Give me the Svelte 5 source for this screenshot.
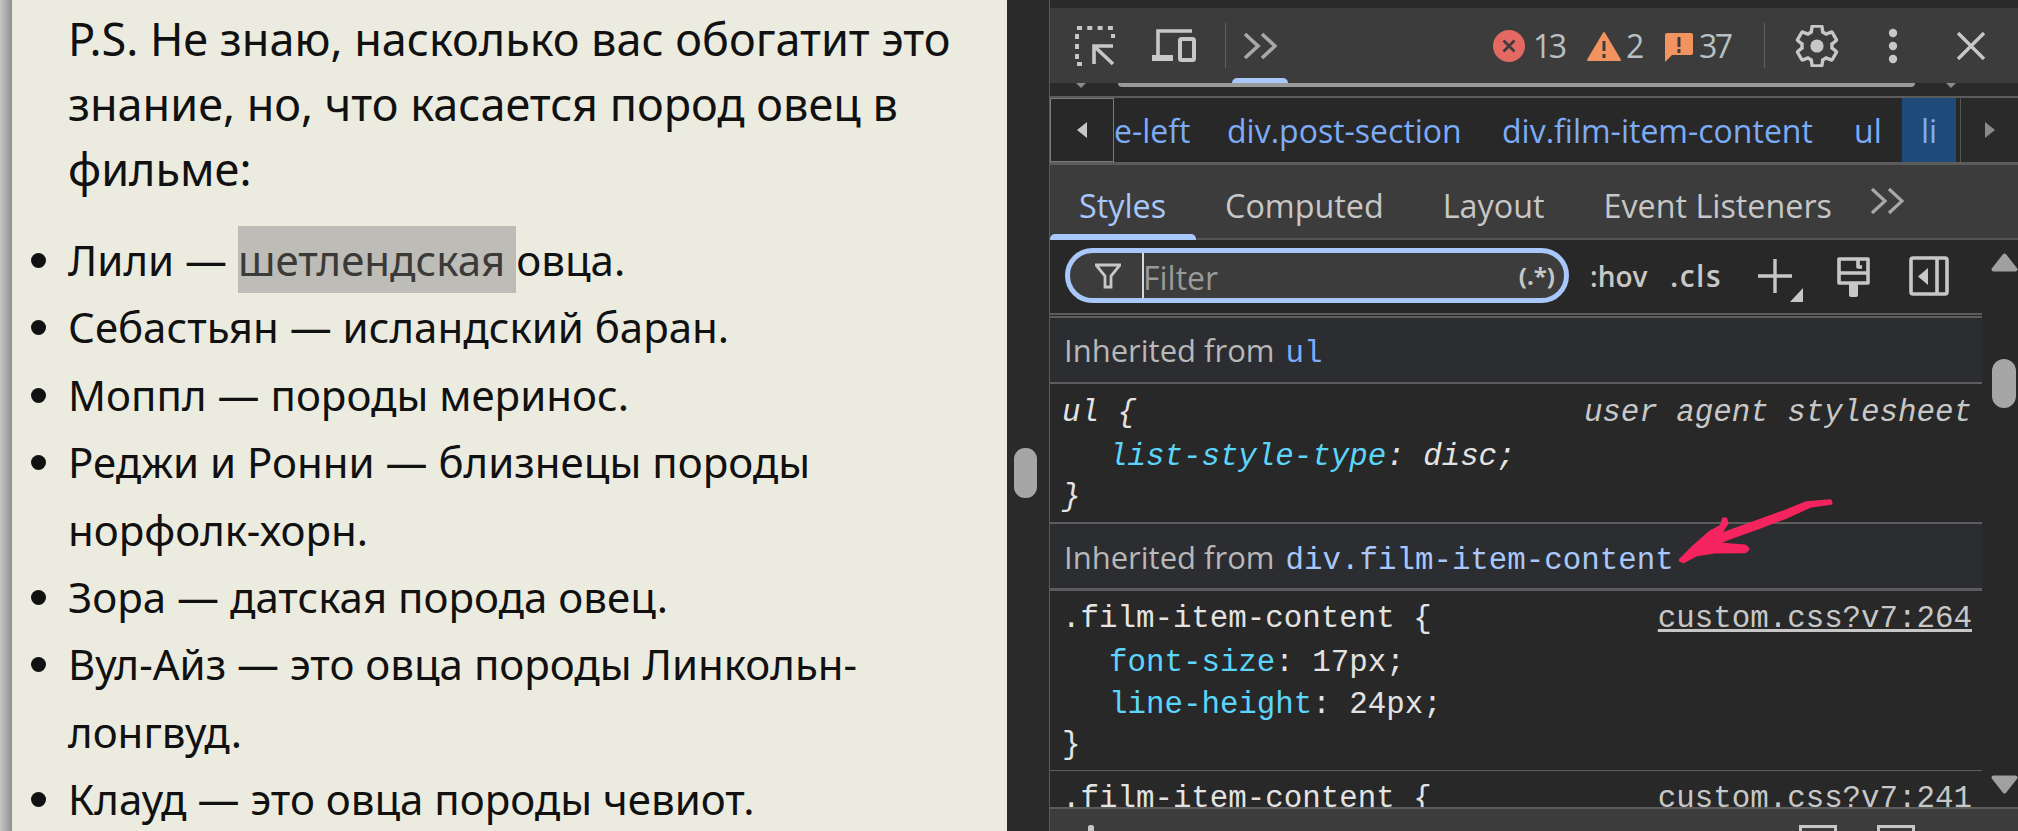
<script lang="ts">
	const list = [
		'Себастьян — исландский баран.',
		'Моппл — породы меринос.',
		'Реджи и Ронни — близнецы породы норфолк-хорн.',
		'Зора — датская порода овец.',
		'Вул-Айз — это овца породы Линкольн-лонгвуд.',
		'Клауд — это овца породы чевиот.'
	];
</script>

<div class="screen">
	<main class="page">
		<p>P.S. Не знаю, насколько вас обогатит это знание, но, что касается пород овец в фильме:</p>
		<ul>
			<li>Лили — <mark>шетлендская{' '}</mark>овца.</li>
			{#each list as item}
				<li>{item}</li>
			{/each}
		</ul>
	</main>

	<div class="gutter"><span class="handle"></span></div>

	<section class="devtools">
		<div class="top-gap"></div>

		<header class="toolbar">
			<svg class="i-inspect" width="40" height="40" viewBox="0 0 40 40" fill="none" stroke="#c7c7c7" stroke-width="4">
				<path d="M2 2h36" stroke-dasharray="5 5.300" />
				<path d="M2 8v30h10" stroke-dasharray="5 5" />
				<path d="M38 8v7" stroke-dasharray="4 3" />
				<path d="M38 20H19v18M19 20l19 18" stroke-width="3.600" />
			</svg>
			<svg class="i-device" width="46" height="36" viewBox="0 0 46 36" fill="none" stroke="#c7c7c7" stroke-width="3.6">
				<path d="M42 3H8v24" />
				<path d="M2 30h21" stroke-width="6" />
				<rect x="30" y="11" width="14" height="21" rx="1.500" stroke-width="4" />
			</svg>
			<span class="sep s1"></span>
			<svg class="chev c1" width="34" height="28" viewBox="0 0 34 28" fill="none" stroke="#a8a8a8" stroke-width="3.6">
				<path d="M2 2l13 12L2 26M19 2l13 12-13 12" />
			</svg>
			<span class="tab-mark"></span>

			<svg class="i-err" width="32" height="32" viewBox="0 0 32 32">
				<circle cx="16" cy="16" r="16" fill="#e46962" />
				<path d="M10.500 10.500l11 11M21.500 10.500l-11 11" stroke="#3c3c3c" stroke-width="2.800" />
			</svg>
			<span class="count n13">13</span>
			<svg class="i-warn" width="36" height="30" viewBox="0 0 36 30">
				<path d="M18 2l16 27H2z" fill="#f29360" stroke="#f29360" stroke-width="2" stroke-linejoin="round" />
				<path d="M18 10v10M18 23v4" stroke="#3c3c3c" stroke-width="3" />
			</svg>
			<span class="count n2">2</span>
			<svg class="i-msg" width="30" height="30" viewBox="0 0 30 30">
				<path d="M3 1h24q2 0 2 2v18q0 2-2 2H8l-7 7V3q0-2 2-2z" fill="#f29360" />
				<path d="M15 5v10M15 17v4" stroke="#3c3c3c" stroke-width="3" />
			</svg>
			<span class="count n37">37</span>
			<span class="sep s2"></span>
			<svg class="i-gear" width="44" height="42" viewBox="1.500 1.500 21 21" fill="none" stroke="#c7c7c7" stroke-width="1.700">
				<path d="M19.430 12.980c.04-.32.07-.64.07-.98s-.03-.66-.07-.98l2.110-1.650c.19-.15.24-.42.12-.64l-2-3.460c-.12-.22-.39-.3-.61-.22l-2.490 1c-.52-.4-1.080-.73-1.690-.98l-.38-2.650C14.460 2.180 14.250 2 14 2h-4c-.25 0-.46.18-.49.42l-.38 2.650c-.61.25-1.170.59-1.690.98l-2.490-1c-.23-.09-.49 0-.61.22l-2 3.460c-.13.22-.07.49.12.64l2.110 1.650c-.04.32-.07.65-.07.98s.03.66.07.98l-2.110 1.650c-.19.15-.24.42-.12.64l2 3.460c.12.22.39.3.61.22l2.490-1c.52.4 1.080.73 1.690.98l.38 2.650c.03.24.24.42.49.42h4c.25 0 .46-.18.49-.42l.38-2.650c.61-.25 1.170-.59 1.690-.98l2.490 1c.23.09.49 0 .61-.22l2-3.460c.12-.22.07-.49-.12-.64l-2.110-1.650z" />
				<circle cx="12" cy="12" r="3.300" fill="#c7c7c7" stroke="none" />
			</svg>
			<svg class="i-kebab" width="10" height="36" viewBox="0 0 10 36" fill="#c7c7c7">
				<circle cx="5" cy="5" r="4.200" /><circle cx="5" cy="18" r="4.200" /><circle cx="5" cy="31" r="4.200" />
			</svg>
			<svg class="i-close" width="30" height="28" viewBox="0 0 30 28" stroke="#c7c7c7" stroke-width="3.400">
				<path d="M2 1l26 26M28 1L2 27" />
			</svg>
		</header>

		<div class="strip">
			<span class="strip-arrow"></span>
			<span class="strip-thumb"></span>
			<span class="strip-arrow"></span>
		</div>

		<nav class="crumbs">
			<span class="crumb-btn left"><i></i></span>
			<div class="crumb-list">
				<span class="clip">e-left</span>
				<span class="post">div.post-section</span>
				<span class="film">div.film-item-content</span>
				<span class="ul">ul</span>
				<span class="li">li</span>
			</div>
			<span class="crumb-btn right"><i></i></span>
		</nav>

		<div class="tabs">
			<span class="tab active">Styles</span>
			<span class="tab">Computed</span>
			<span class="tab">Layout</span>
			<span class="tab">Event Listeners</span>
			<svg class="chev c2" width="34" height="28" viewBox="0 0 34 28" fill="none" stroke="#a8a8a8" stroke-width="3.200">
				<path d="M2 2l13 12L2 26M19 2l13 12-13 12" />
			</svg>
		</div>

		<div class="styles">
			<div class="pane">
				<div class="filter-bar">
					<div class="filter">
						<svg width="26" height="26" viewBox="0 0 26 26" fill="none" stroke="#c7c7c7" stroke-width="2.800">
							<path d="M1 2h24l-9 11v11h-6V13z" />
						</svg>
						<span class="caret"></span>
						<span class="placeholder">Filter</span>
						<span class="regex">(.*)</span>
					</div>
					<span class="bar-text hov">:hov</span>
					<span class="bar-text cls">.cls</span>
					<svg class="i-plus" width="46" height="44" viewBox="0 0 46 44">
						<path d="M17 1v34M0 18h34" stroke="#c7c7c7" stroke-width="3.400" />
						<path d="M45 30v14H32z" fill="#c7c7c7" />
					</svg>
					<svg class="i-paint" width="36" height="42" viewBox="0 0 36 42" fill="none" stroke="#c7c7c7" stroke-width="3.600" stroke-linejoin="round">
						<path d="M3 3h29v24H3zM3 17h29M22 3v8h4" />
						<path d="M13 27h9v12q0 2-2 2h-5q-2 0-2-2z" fill="#c7c7c7" stroke="none" />
					</svg>
					<svg class="i-side" width="40" height="40" viewBox="0 0 40 40" fill="none" stroke="#c7c7c7" stroke-width="3.600">
						<rect x="2" y="2" width="36" height="36" rx="2" />
						<path d="M28 2v36" />
						<path d="M19 12v17l-10-8.500z" fill="#c7c7c7" stroke="none" />
					</svg>
				</div>

				<div class="divider double"></div>
				<div class="inherit">Inherited from <code>ul</code></div>

				<div class="rule first">
					<div class="line"><em>ul {'{'}</em><em class="src">user agent stylesheet</em></div>
					<div class="line prop"><em><b>list-style-type</b>: disc;</em></div>
					<div class="line"><em>{'}'}</em></div>
				</div>

				<div class="inherit second">Inherited from <code>div.film-item-content</code></div>

				<div class="rule">
					<div class="line"><span>.film-item-content {'{'}</span><u class="src">custom.css?v7:264</u></div>
					<div class="line prop"><span><b>font-size</b>: 17px;</span></div>
					<div class="line prop"><span><b>line-height</b>: 24px;</span></div>
					<div class="line"><span>{'}'}</span></div>
				</div>

				<div class="rule last">
					<div class="line"><span>.film-item-content {'{'}</span><u class="src">custom.css?v7:241</u></div>
				</div>
			</div>

			<div class="vscroll">
				<svg class="up" width="27" height="19" viewBox="0 0 27 19" fill="#a0a0a0" stroke="#a0a0a0" stroke-width="4" stroke-linejoin="round">
					<path d="M13.500 2.500L24.500 16.500H2.500z" />
				</svg>
				<span class="thumb"></span>
				<svg class="down" width="27" height="19" viewBox="0 0 27 19" fill="#a0a0a0" stroke="#a0a0a0" stroke-width="4" stroke-linejoin="round">
					<path d="M13.500 16.500L24.500 2.500H2.500z" />
				</svg>
			</div>
		</div>

		<footer class="bottom">
			<span class="peek a"></span>
			<span class="peek b"></span>
			<span class="peek c"></span>
		</footer>
	</section>

	<!-- hand-drawn annotation on top of the screenshot -->
	<svg class="arrow" width="190" height="90" viewBox="0 0 570 270" fill="#f5245f" stroke="#f5245f" stroke-width="11" stroke-linejoin="round">
		<path d="M62 210L100 172L150 128L185 108L191 88L197 88L200 100L188 118L170 136L200 128L300 92L370 67L440 39L510 33L512 39L450 48L380 80L300 110L200 146L170 162L255 169L263 177L255 184L165 185L110 193L70 214z" />
	</svg>
</div>

<style>
	:global(body) {
		margin: 0;
		overflow: hidden;
	}

	.screen {
		position: relative;
		display: flex;
		width: 2018px;
		height: 831px;
		overflow: hidden;
		background: #2a2a2a;
	}

	.page {
		box-sizing: border-box;
		width: 1007px;
		height: 831px;
		margin: 0;
		padding: 6px 40px 0 68px;
		overflow: hidden;
		flex: none;
		color: #111;
		background: linear-gradient(90deg, #c6c6c4, #8f8f8f) 0 0 / 12px 100% no-repeat, #ecebe0;
		font: 42px/65px 'Noto Sans', sans-serif;
	}

	p {
		margin: 0 0 25px;
		font-size: 45px;
		line-height: 65px;
	}

	ul {
		margin: 0;
		padding: 0;
		list-style: disc;
		line-height: 67.4px;
	}

	mark {
		padding: 5px 0;
		color: #3a3a38;
		background: #bdbcb7;
	}

	.gutter {
		display: flex;
		flex: none;
		align-items: flex-start;
		justify-content: center;
		box-sizing: border-box;
		width: 42px;
		padding-top: 448px;
		padding-right: 6px;
	}

	.handle {
		width: 23px;
		height: 50px;
		border-radius: 11px;
		background: #a6a6a6;
	}

	.devtools {
		display: flex;
		flex: 1;
		flex-direction: column;
		min-width: 0;
		border-left: 1px solid #5a5a5a;
		color: #c7c7c7;
		font-family: 'Open Sans', sans-serif;
	}

	.top-gap {
		height: 8px;
		flex: none;
	}

	.toolbar {
		position: relative;
		display: flex;
		flex: none;
		align-items: center;
		height: 75px;
		background: #3c3c3c;
	}

	.toolbar > * {
		flex: none;
	}

	.i-inspect { margin-left: 25px; }
	.i-device { margin-left: 35px; }
	.sep { width: 1px; height: 45px; background: #5f5f5f; }
	.s1 { margin-left: 29px; }
	.c1 { margin-left: 17px; }
	.i-err { margin-left: 216px; }
	.i-warn { margin-left: 20px; }
	.i-msg { margin-left: 21px; margin-top: 2px; }
	.count {
		font-size: 32px;
		color: #b9c0c5;
		letter-spacing: -2.500px;
	}
	.n13 { width: 33px; margin-left: 8px; }
	.n2 { width: 17px; margin-left: 4px; }
	.n37 { width: 34px; margin-left: 5px; }
	.s2 { margin-left: 31px; }
	.i-gear { margin-left: 30px; }
	.i-kebab { margin-left: 49px; }
	.i-close { margin-left: 58px; }

	.tab-mark {
		position: absolute;
		left: 182px;
		bottom: 0;
		width: 56px;
		height: 5px;
		border-radius: 5px 5px 0 0;
		background: #a8c7fa;
	}

	.strip {
		display: flex;
		flex: none;
		align-items: flex-start;
		justify-content: space-between;
		box-sizing: border-box;
		height: 13px;
		padding: 0 62px 0 26px;
		background: #2a2a2a;
	}

	.strip-thumb {
		width: 797px;
		height: 4px;
		border-radius: 0 0 4px 4px;
		background: #9a9a9a;
	}

	.strip-arrow {
		width: 0;
		height: 0;
		border: 5px solid transparent;
		border-top-color: #8a8a8a;
		border-bottom: 0;
	}

	.crumbs {
		display: flex;
		flex: none;
		height: 64px;
		border-top: 2px solid #5c5c5c;
		border-bottom: 3px solid #5c5c5c;
		background: #282828;
		font-size: 32px;
		line-height: 66px;
	}

	.crumb-btn {
		display: flex;
		flex: none;
		align-items: center;
		justify-content: center;
		box-sizing: border-box;
		height: 64px;
	}

	.crumb-btn i {
		width: 0;
		height: 0;
		border-top: 8px solid transparent;
		border-bottom: 8px solid transparent;
	}

	.left {
		width: 64px;
		border: 1px solid #7a7a7a;
	}

	.left i {
		border-right: 10px solid #c7c7c7;
	}

	.right {
		width: 58px;
		border-left: 1px solid #555;
		background: #2a2a2a;
	}

	.right i {
		border-left: 10px solid #8a8a8a;
	}

	.crumb-list {
		display: flex;
		flex: 1;
		min-width: 0;
		overflow: hidden;
		color: #7cacf8;
		white-space: nowrap;
	}

	.crumb-list > * {
		flex: none;
	}

	.clip { width: 75px; }
	.post { width: 235px; margin-left: 38px; }
	.film { width: 314px; margin-left: 40px; }
	.ul { width: 26px; margin-left: 38px; }
	.li {
		width: 54px;
		margin-left: 22px;
		text-align: center;
		background: #1f4b7a;
	}

	.tabs {
		position: relative;
		display: flex;
		flex: none;
		align-items: center;
		gap: 59px;
		box-sizing: border-box;
		height: 75px;
		padding: 7px 0 0 29px;
		background: #3c3c3c;
		border-bottom: 2px solid #555;
		font-size: 32.300px;
		font-weight: 500;
	}

	.tab {
		color: #c7c7c7;
		white-space: nowrap;
	}

	.active {
		color: #a8c7fa;
	}

	.active::after {
		content: '';
		position: absolute;
		left: 0;
		bottom: -2px;
		width: 146px;
		height: 6px;
		border-radius: 5px 5px 0 0;
		background: #a8c7fa;
	}

	.c2 {
		margin-left: -21px;
		margin-top: -8px;
	}

	.styles {
		display: flex;
		flex: 1;
		min-height: 0;
		background: #282828;
	}

	.pane {
		flex: 1;
		min-width: 0;
		overflow: hidden;
	}

	.filter-bar {
		display: flex;
		align-items: center;
		height: 73px;
		box-sizing: border-box;
		padding-bottom: 2px;
	}

	.filter-bar > * {
		flex: none;
	}

	.filter {
		display: flex;
		align-items: center;
		box-sizing: border-box;
		width: 504px;
		height: 55px;
		margin-left: 15px;
		padding: 0 9px 0 25px;
		border: 5px solid #a8c7fa;
		border-radius: 28px;
		background: #3c3c3c;
	}

	.caret {
		width: 2px;
		height: 45px;
		margin-left: 21px;
		background: #d8d8d8;
	}

	.placeholder {
		margin-left: -1px;
		margin-top: 3px;
		font-size: 32px;
		color: #9a9a9a;
	}

	.regex {
		margin-left: auto;
		font-size: 24px;
		font-weight: 700;
		color: #c7c7c7;
	}

	.bar-text {
		font-size: 28px;
		font-weight: 600;
		color: #c7c7c7;
		white-space: nowrap;
	}

	.hov { width: 60px; margin-left: 21px; }
	.cls { width: 54px; margin-left: 20px; font-size: 30px; letter-spacing: 1.500px; }
	.i-plus { margin-left: 34px; margin-top: 9px; }
	.i-paint { margin-left: 32px; margin-top: 3px; }
	.i-side { margin-left: 37px; margin-top: 1px; }

	.divider.double {
		height: 5px;
		box-sizing: border-box;
		border-top: 2px solid #5c5c5c;
		border-bottom: 2px solid #5c5c5c;
	}

	.inherit {
		box-sizing: border-box;
		height: 66px;
		padding-left: 14px;
		border-bottom: 2px solid #5c5c5c;
		background: #2b2d30;
		font-size: 31px;
		line-height: 64px;
		color: #b8b8b8;
	}

	.inherit.second {
		height: 67px;
		line-height: 66px;
		border-bottom-width: 3px;
	}

	code {
		margin-left: 3px;
		font: 30.800px 'Liberation Mono', monospace;
		color: #7cacf8;
	}

	.second code {
		color: #a8c7fa;
	}

	.rule {
		padding: 7px 10px 4px 12px;
		border-bottom: 1px solid #5c5c5c;
		font: 30.800px 'Liberation Mono', monospace;
		color: #e3e3e3;
	}

	.first {
		padding: 8px 10px 4px 12px;
		border-bottom: 2px solid #5c5c5c;
	}

	.last {
		border-bottom: 0;
	}

	.line {
		display: flex;
		justify-content: space-between;
		height: 42px;
		line-height: 42px;
		white-space: nowrap;
	}

	.prop {
		padding-left: 47px;
		line-height: 46px;
	}

	.prop b {
		font-weight: 400;
		color: #5cd5fb;
	}

	.src {
		color: #c7c7c7;
	}

	.vscroll {
		position: relative;
		flex: none;
		width: 36px;
	}

	.up,
	.down {
		position: absolute;
		left: 9px;
	}

	.up {
		top: 13px;
	}

	.down {
		top: 535px;
	}

	.thumb {
		position: absolute;
		top: 119px;
		left: 10px;
		width: 24px;
		height: 49px;
		border-radius: 12px;
		background: #a6a6a6;
	}

	.bottom {
		position: relative;
		flex: none;
		height: 24px;
		box-sizing: border-box;
		border-top: 2px solid #5c5c5c;
		background: #3c3c3c;
	}

	.peek {
		position: absolute;
		top: 16px;
		height: 8px;
		box-sizing: border-box;
		border: 3px solid #c7c7c7;
		border-bottom: 0;
	}

	.a { left: 38px; width: 6px; border-radius: 3px 3px 0 0; }
	.b { left: 749px; width: 38px; }
	.c { left: 827px; width: 38px; }

	.arrow {
		position: absolute;
		left: 1660px;
		top: 490px;
	}
</style>
